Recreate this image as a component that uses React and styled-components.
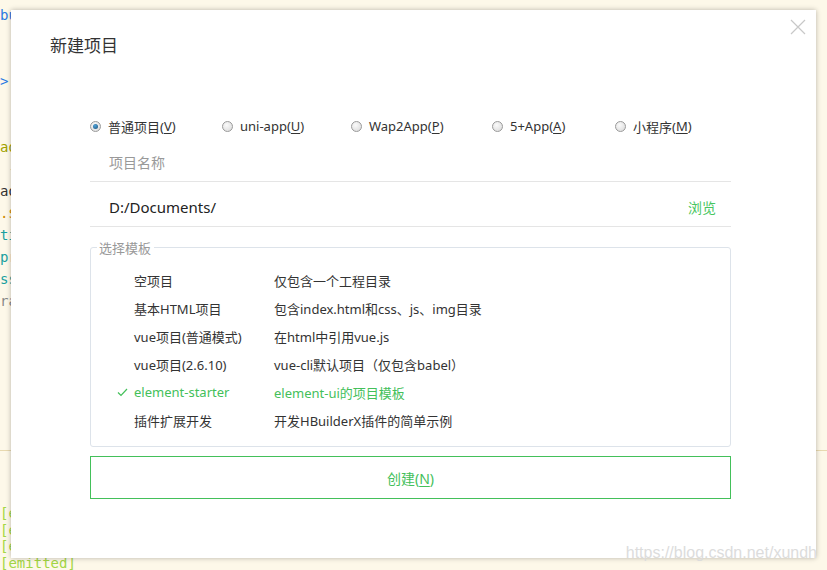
import React from "react";
import styled, { createGlobalStyle } from "styled-components";

const GlobalStyle = createGlobalStyle`
  html, body {
    margin: 0;
    padding: 0;
    background: #fdf8e9;
    overflow: hidden;
  }
  body {
    font-family: "Noto Sans", "Noto Sans CJK SC", sans-serif;
  }
`;

const Page = styled.div`
  position: relative;
  width: 827px;
  height: 570px;
  background: #fdf8e9;
`;

const Editor = styled.div`
  padding-top: 4px;
  font-family: "DejaVu Sans Mono", "Liberation Mono", monospace;
  font-size: 14px;
  line-height: 22px;
`;

const CodeLine = styled.div`
  height: 22px;
  white-space: pre;
  color: ${(p) => p.color || "#333"};
`;

const Divider = styled.div`
  height: 1px;
  margin-top: 6px;
  background: #e8d9b0;
`;

const Log = styled.div`
  padding-top: 54px;
  font-family: "DejaVu Sans Mono", "Liberation Mono", monospace;
  font-size: 14px;
  line-height: 16.5px;
  color: #a3d644;
`;

const Dialog = styled.div`
  position: absolute;
  left: 11px;
  top: 10px;
  width: 805px;
  height: 548px;
  background: #fff;
  box-shadow: 0 0 5px rgba(0, 0, 0, 0.28);
  box-sizing: border-box;
  padding: 25px 85px 0 79px;
  color: #333;
`;

const Title = styled.h1`
  margin: 0 0 0 -40px;
  font-size: 17px;
  font-weight: 400;
  line-height: 22px;
  color: #333;
`;

const Close = styled.div`
  position: absolute;
  right: 10px;
  top: 8px;
  width: 16px;
  height: 16px;
`;

const RadioRow = styled.div`
  display: flex;
  margin-top: 58px;
  height: 22px;
  align-items: center;
`;

const RadioItem = styled.label`
  display: flex;
  align-items: center;
  width: ${(p) => p.w}px;
  font-size: 13px;
  color: #333;
`;

const RadioDot = styled.span`
  width: 11px;
  height: 11px;
  border-radius: 50%;
  box-sizing: border-box;
  border: 1px solid #9a9a9a;
  background: radial-gradient(circle at 40% 35%, #fafafa, #d8d8d8);
  margin-right: 7px;
  position: relative;
  &::after {
    content: "";
    display: ${(p) => (p.checked ? "block" : "none")};
    position: absolute;
    left: 2px;
    top: 2px;
    width: 5px;
    height: 5px;
    border-radius: 50%;
    background: radial-gradient(circle at 40% 35%, #4fa3d8, #1a4f7a);
  }
`;

const Key = styled.span`
  text-decoration: underline;
  text-underline-offset: 2px;
`;

const Field = styled.div`
  display: flex;
  align-items: center;
  height: 38px;
  padding: 6px 15px 0 19px;
  border-bottom: 1px solid #e5e5e5;
  font-size: ${(p) => (p.big ? 15 : 14)}px;
  color: ${(p) => (p.muted ? "#999" : "#222")};
`;

const Grow = styled.span`
  flex: 1;
`;

const Browse = styled.span`
  color: #48c65e;
  font-size: 14px;
`;

const Fieldset = styled.fieldset`
  margin: 11px 0 0 0;
  padding: 9px 0 6px 0;
  border: 1px solid #dde3ea;
  border-radius: 3px;
  height: 209px;
  box-sizing: border-box;
`;

const Legend = styled.legend`
  margin-left: 6px;
  padding: 0 3px 0 2px;
  font-size: 13px;
  color: #999;
`;

const TemplateRow = styled.div`
  display: grid;
  grid-template-columns: 43px 140px 1fr;
  height: 28px;
  align-items: center;
  font-size: 13px;
  color: ${(p) => (p.active ? "#43c05a" : "#333")};
`;

const Check = styled.span`
  display: flex;
  justify-content: flex-end;
  padding-right: 6px;
`;

const CreateButton = styled.button`
  display: block;
  width: 100%;
  height: 43px;
  margin-top: 9px;
  background: #fff;
  border: 1px solid #43c05a;
  color: #43c05a;
  font-family: inherit;
  font-size: 14px;
`;

const Watermark = styled.div`
  position: absolute;
  right: 10px;
  bottom: 8px;
  font-family: "Liberation Sans", Arial, sans-serif;
  font-size: 16px;
  color: #dcdcdc;
`;

const radios = [
  { label: "普通项目", key: "V", w: 132, checked: true },
  { label: "uni-app", key: "U", w: 129 },
  { label: "Wap2App", key: "P", w: 141 },
  { label: "5+App", key: "A", w: 123 },
  { label: "小程序", key: "M", w: 100 },
];

const templates = [
  ["空项目", "仅包含一个工程目录"],
  ["基本HTML项目", "包含index.html和css、js、img目录"],
  ["vue项目(普通模式)", "在html中引用vue.js"],
  ["vue项目(2.6.10)", "vue-cli默认项目（仅包含babel）"],
  ["element-starter", "element-ui的项目模板", true],
  ["插件扩展开发", "开发HBuilderX插件的简单示例"],
];

const codeLines = [
  ["button", "#2a7ae2"],
  ["", ""],
  ["", ""],
  [">", "#2a7ae2"],
  ["", ""],
  ["", ""],
  ["add", "#a0a000"],
  [" -", "#888"],
  ["add", "#333"],
  [".$s", "#d08a00"],
  ["tit", "#1aa0a0"],
  ["pre", "#1aa0a0"],
  ["ss:", "#1aa0a0"],
  ["ra", "#888"],
  ["", ""],
  ["", ""],
  ["", ""],
  ["", ""],
  ["", ""],
  ["", ""],
];

export default function App() {
  return (
    <Page>
      <GlobalStyle />
      <Editor>
        {codeLines.map(([t, c], i) => (
          <CodeLine key={i} color={c}>
            {t}
          </CodeLine>
        ))}
      </Editor>
      <Divider />
      <Log>
        <div>[emitted]</div>
        <div>[emitted]</div>
        <div>[emitted]</div>
        <div>[emitted]</div>
      </Log>

      <Dialog>
        <Title>新建项目</Title>
        <Close>
          <svg width="16" height="16" viewBox="0 0 16 16">
            <path d="M1 1L15 15M15 1L1 15" stroke="#c8c8c8" strokeWidth="1.2" />
          </svg>
        </Close>

        <RadioRow>
          {radios.map((r) => (
            <RadioItem key={r.key} w={r.w}>
              <RadioDot checked={r.checked} />
              {r.label}(<Key>{r.key}</Key>)
            </RadioItem>
          ))}
        </RadioRow>

        <div>
          <Field muted>项目名称</Field>
          <Field big>
            <Grow>D:/Documents/</Grow>
            <Browse>浏览</Browse>
          </Field>
        </div>

        <Fieldset>
          <Legend>选择模板</Legend>
          {templates.map(([name, desc, active]) => (
            <TemplateRow key={name} active={active}>
              <Check>
                {active && (
                  <svg width="11" height="9" viewBox="0 0 11 9">
                    <path d="M1 4.5L4 7.5L10 1" fill="none" stroke="#43c05a" strokeWidth="1.2" />
                  </svg>
                )}
              </Check>
              <span>{name}</span>
              <span>{desc}</span>
            </TemplateRow>
          ))}
        </Fieldset>

        <CreateButton>
          创建(<Key>N</Key>)
        </CreateButton>
      </Dialog>
      <Watermark>https://blog.csdn.net/xundh</Watermark>
    </Page>
  );
}
